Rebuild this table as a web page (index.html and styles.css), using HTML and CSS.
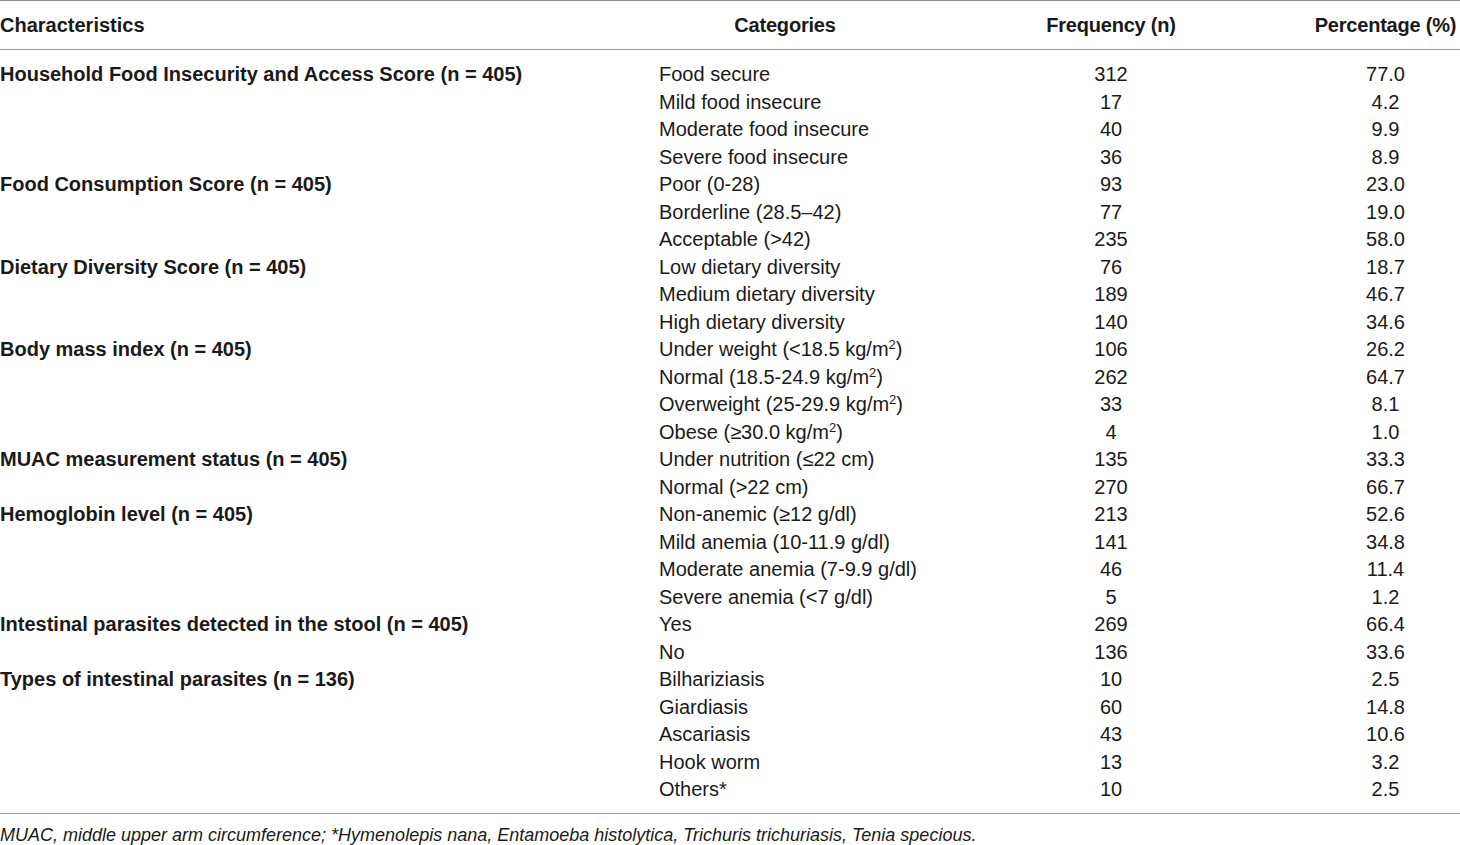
FILE: index.html
```html
<!DOCTYPE html>
<html lang="en">
<head>
    <meta charset="UTF-8">
    <title>Nutritional status</title>
    <link rel="stylesheet" href="styles.css">
</head>
<body>

    <table class="data-table">
        <colgroup>
            <col class="col-char">
            <col class="col-cat">
            <col class="col-freq">
            <col class="col-pct">
        </colgroup>
        <thead>
            <tr>
                <th class="left">Characteristics</th>
                <th class="cond">Categories</th>
                <th class="cond">Frequency (n)</th>
                <th class="cond">Percentage (%)</th>
            </tr>
        </thead>
        <tbody>
            <tr class="first">
                <td class="group">Household Food Insecurity and Access Score (n = 405)</td>
                <td class="cat">Food secure</td><td>312</td><td>77.0</td>
            </tr>
            <tr><td></td><td class="cat">Mild food insecure</td><td>17</td><td>4.2</td></tr>
            <tr><td></td><td class="cat">Moderate food insecure</td><td>40</td><td>9.9</td></tr>
            <tr><td></td><td class="cat">Severe food insecure</td><td>36</td><td>8.9</td></tr>

            <tr>
                <td class="group">Food Consumption Score (n = 405)</td>
                <td class="cat">Poor (0-28)</td><td>93</td><td>23.0</td>
            </tr>
            <tr><td></td><td class="cat">Borderline (28.5–42)</td><td>77</td><td>19.0</td></tr>
            <tr><td></td><td class="cat">Acceptable (&gt;42)</td><td>235</td><td>58.0</td></tr>

            <tr>
                <td class="group">Dietary Diversity Score (n = 405)</td>
                <td class="cat">Low dietary diversity</td><td>76</td><td>18.7</td>
            </tr>
            <tr><td></td><td class="cat">Medium dietary diversity</td><td>189</td><td>46.7</td></tr>
            <tr><td></td><td class="cat">High dietary diversity</td><td>140</td><td>34.6</td></tr>

            <tr>
                <td class="group">Body mass index (n = 405)</td>
                <td class="cat">Under weight (&lt;18.5 kg/m<sup>2</sup>)</td><td>106</td><td>26.2</td>
            </tr>
            <tr><td></td><td class="cat">Normal (18.5-24.9 kg/m<sup>2</sup>)</td><td>262</td><td>64.7</td></tr>
            <tr><td></td><td class="cat">Overweight (25-29.9 kg/m<sup>2</sup>)</td><td>33</td><td>8.1</td></tr>
            <tr><td></td><td class="cat">Obese (≥30.0 kg/m<sup>2</sup>)</td><td>4</td><td>1.0</td></tr>

            <tr>
                <td class="group">MUAC measurement status (n = 405)</td>
                <td class="cat">Under nutrition (≤22 cm)</td><td>135</td><td>33.3</td>
            </tr>
            <tr><td></td><td class="cat">Normal (&gt;22 cm)</td><td>270</td><td>66.7</td></tr>

            <tr>
                <td class="group">Hemoglobin level (n = 405)</td>
                <td class="cat">Non-anemic (≥12 g/dl)</td><td>213</td><td>52.6</td>
            </tr>
            <tr><td></td><td class="cat">Mild anemia (10-11.9 g/dl)</td><td>141</td><td>34.8</td></tr>
            <tr><td></td><td class="cat">Moderate anemia (7-9.9 g/dl)</td><td>46</td><td>11.4</td></tr>
            <tr><td></td><td class="cat">Severe anemia (&lt;7 g/dl)</td><td>5</td><td>1.2</td></tr>

            <tr>
                <td class="group">Intestinal parasites detected in the stool (n = 405)</td>
                <td class="cat">Yes</td><td>269</td><td>66.4</td>
            </tr>
            <tr><td></td><td class="cat">No</td><td>136</td><td>33.6</td></tr>

            <tr>
                <td class="group">Types of intestinal parasites (n = 136)</td>
                <td class="cat">Bilhariziasis</td><td>10</td><td>2.5</td>
            </tr>
            <tr><td></td><td class="cat">Giardiasis</td><td>60</td><td>14.8</td></tr>
            <tr><td></td><td class="cat">Ascariasis</td><td>43</td><td>10.6</td></tr>
            <tr><td></td><td class="cat">Hook worm</td><td>13</td><td>3.2</td></tr>
            <tr class="last"><td></td><td class="cat">Others*</td><td>10</td><td>2.5</td></tr>
        </tbody>
    </table>

    <p class="footnote">MUAC, middle upper arm circumference; *Hymenolepis nana, Entamoeba histolytica, Trichuris trichuriasis, Tenia specious.</p>

</body>
</html>
```

FILE: styles.css
```css
body {
    margin: 0;
    background-color: #fff;
    font-family: "Liberation Sans", Arial, sans-serif;
    color: #1a1a1a;
}

.data-table {
    width: 1460px;
    border-collapse: collapse;
    table-layout: fixed;
    font-size: 20px;
}

.col-char { width: 659px; }
.col-cat { width: 252px; }
.col-freq { width: 400px; }
.col-pct { width: 149px; }

/* Header */
th {
    height: 48px;
    padding: 0;
    font-weight: bold;
    text-align: center;
    border-top: 1px solid #8c8c8c;
    border-bottom: 1px solid #9a9a9a;
}

th.left {
    text-align: left;
}

th.cond {
    letter-spacing: -0.2px;
}

/* Body rows */
td {
    padding: 0;
    height: 27.5px;
    line-height: 27.5px;
    text-align: center;
    white-space: nowrap;
}

td.group {
    text-align: left;
    font-weight: bold;
}

td.cat {
    text-align: left;
}

tr.first td {
    padding-top: 11px;
}

tr.last td {
    padding-bottom: 9px;
    border-bottom: 1px solid #a0a0a0;
}

sup {
    font-size: 13px;
    line-height: 0;
    vertical-align: 7px;
}

.footnote {
    margin: 10px 0 0;
    font-size: 18px;
    font-style: italic;
    line-height: 22px;
}
```
